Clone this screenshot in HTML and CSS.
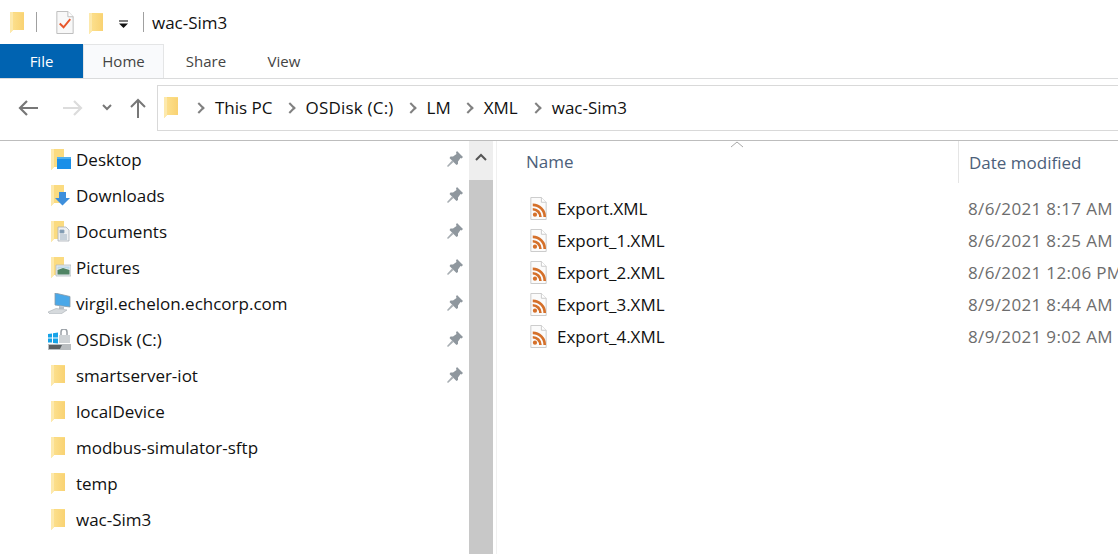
FILE: index.html
```html
<!DOCTYPE html>
<html lang="en">
<head>
    <meta charset="UTF-8">
    <title>wac-Sim3</title>
    <link rel="stylesheet" href="styles.css">
</head>
<body>

<svg class="defs" width="0" height="0">
    <defs>
        <linearGradient id="folder-fill" x1="0" y1="0" x2="1" y2="0">
            <stop offset="0" stop-color="#fcdf8c"/>
            <stop offset="1" stop-color="#f9d272"/>
        </linearGradient>
    </defs>
    <symbol id="folder" viewBox="0 0 14 21">
        <path d="M0 0H14V18H3L0 21Z" fill="#fbdb80"/>
        <path d="M3 1H14V18H3Z" fill="url(#folder-fill)"/>
        <path d="M0 0H3V18L0 21Z" fill="#fde9ac"/>
    </symbol>
    <symbol id="folder-back" viewBox="0 0 14 21">
        <path d="M0 0H13V18H3L0 21Z" fill="#fbdb80"/>
        <path d="M0 0H3V18L0 21Z" fill="#fde9ac"/>
    </symbol>
    <symbol id="xml" viewBox="0 0 17 24">
        <path d="M.5 .5H11.500L16.500 5.500V23.500H.5Z" fill="#fbfbfb" stroke="#cacaca"/>
        <path d="M11.500 .5V5.500H16.500" fill="#fff" stroke="#cacaca"/>
        <circle cx="4.800" cy="18.500" r="2.200" fill="#d5702a"/>
        <path d="M2.500 12.800A8 8 0 0 1 10.500 20.800M2.500 8.200A12.500 12.500 0 0 1 15 20.800" fill="none" stroke="#d5702a" stroke-width="2.800"/>
    </symbol>
    <symbol id="pin" viewBox="0 0 16 16">
        <path d="M10 0L16 6L14.500 7.500L13.500 7L11 10.500L11 13L9.500 14L2.500 7L3.500 5.500L6 5.500L9.500 3L9 1.500Z" fill="#8f979e"/>
        <path d="M5 9.500L0 15L1 16L6.500 11Z" fill="#a8aeb3"/>
    </symbol>
</svg>

<div class="titlebar">
    <svg class="qa-folder"><use href="#folder"/></svg>
    <span class="qa-sep"></span>
    <svg class="qa-check" viewBox="0 0 18 24">
        <path d="M.5 .5H12L17.500 6V23.500H.5Z" fill="#f8f8f8" stroke="#bbb"/>
        <path d="M12 .5V6H17.500" fill="#fff" stroke="#bbb"/>
        <path d="M3.500 13L7.500 17L14.500 8.500" fill="none" stroke="#e8562a" stroke-width="2"/>
    </svg>
    <svg class="qa-folder2"><use href="#folder"/></svg>
    <svg class="qa-more" viewBox="0 0 10 9">
        <path d="M0 .6H10" stroke="#111" stroke-width="1.200"/>
        <path d="M0 3.500H10L5 8.500Z" fill="#111"/>
    </svg>
    <span class="qa-sep qa-sep-title"></span>
    <span class="title-text">wac-Sim3</span>
</div>

<div class="tabs">
    <div class="tab tab-file">File</div>
    <div class="tab tab-home">Home</div>
    <div class="tab tab-share">Share</div>
    <div class="tab tab-view">View</div>
</div>

<div class="navbar">
    <svg class="nav-back" viewBox="0 0 20 16">
        <path d="M20 8H2M9 1L2 8L9 15" fill="none" stroke="#777" stroke-width="2.200"/>
    </svg>
    <svg class="nav-forward" viewBox="0 0 20 16">
        <path d="M0 8H18M11 1L18 8L11 15" fill="none" stroke="#dcdcdc" stroke-width="2.200"/>
    </svg>
    <svg class="nav-down" viewBox="0 0 10 7">
        <path d="M1 1L5 5L9 1" fill="none" stroke="#777" stroke-width="2"/>
    </svg>
    <svg class="nav-up" viewBox="0 0 16 20">
        <path d="M8 20V2M1 9L8 2L15 9" fill="none" stroke="#777" stroke-width="2"/>
    </svg>
    <div class="address">
        <svg class="addr-folder"><use href="#folder"/></svg>
        <span class="crumb">This PC</span>
        <span class="crumb crumb-disk">OSDisk (C:)</span>
        <span class="crumb">LM</span>
        <span class="crumb">XML</span>
        <span class="crumb crumb-last">wac-Sim3</span>
    </div>
</div>

<div class="main">
    <div class="sidebar">
        <div class="nav-row">
            <svg class="nav-icon" viewBox="0 0 20 21">
                <use href="#folder-back" width="14" height="21"/>
                <path d="M6 8H20V20H6Z" fill="#1a8fe8"/>
                <path d="M6 8H20V10H6Z" fill="#4fb0f0"/>
            </svg>
            <span>Desktop</span>
            <svg class="pin"><use href="#pin"/></svg>
        </div>
        <div class="nav-row">
            <svg class="nav-icon" viewBox="0 0 20 21">
                <use href="#folder-back" width="14" height="21"/>
                <path d="M8 7H15V13H19L11.500 20.500L4 13H8Z" fill="#3d8fdc"/>
            </svg>
            <span>Downloads</span>
            <svg class="pin"><use href="#pin"/></svg>
        </div>
        <div class="nav-row">
            <svg class="nav-icon" viewBox="0 0 20 21">
                <use href="#folder-back" width="14" height="21"/>
                <path d="M7 6H15L18 9V20H7Z" fill="#eef0f2" stroke="#a9b0b8" stroke-width=".8"/>
                <path d="M9 9H13V12H9ZM9 14H16M9 16H16M9 18H16" fill="#7f9ab2" stroke="#8aa2b8" stroke-width=".8"/>
            </svg>
            <span>Documents</span>
            <svg class="pin"><use href="#pin"/></svg>
        </div>
        <div class="nav-row">
            <svg class="nav-icon" viewBox="0 0 20 21">
                <use href="#folder-back" width="14" height="21"/>
                <path d="M5 8H20V19H5Z" fill="#e6ebee" stroke="#b4bcc2" stroke-width=".8"/>
                <path d="M6.500 13L12 11L18.500 13V17.500H6.500Z" fill="#4f8464"/>
                <path d="M6.500 9.500H18.500V12L12 10.500L6.500 12Z" fill="#b8d8ea"/>
            </svg>
            <span>Pictures</span>
            <svg class="pin"><use href="#pin"/></svg>
        </div>
        <div class="nav-row nav-row-device">
            <svg class="nav-icon" viewBox="0 0 23 21">
                <path d="M7 0L22 3.500V14L7 12Z" fill="#4aa8e8" stroke="#8a9aa6" stroke-width=".8"/>
                <path d="M11 13L16 13.800V16H11Z" fill="#b8c0c8"/>
                <path d="M0 19L8 15.500L19 17L13 21H2Z" fill="#d6dadd" stroke="#aab0b5" stroke-width=".6"/>
            </svg>
            <span>virgil.echelon.echcorp.com</span>
            <svg class="pin"><use href="#pin"/></svg>
        </div>
        <div class="nav-row nav-row-device">
            <svg class="nav-icon" viewBox="0 0 23 21">
                <path d="M0 5L4 4.500V8.500H0ZM5 4.200L10 3.500V8.500H5ZM0 9.500H4V13.500H0ZM5 9.500H10V14.500L5 14Z" fill="#17a3e8"/>
                <path d="M13 6V3A3 3 0 0 1 19 3V6" fill="none" stroke="#9aa0a6" stroke-width="1.500"/>
                <path d="M11 6H22V14H11Z" fill="#cfd3d6"/>
                <path d="M0 15H23V21H0Z" fill="#b9bdc0"/>
                <path d="M1 16H14L12 20H1Z" fill="#5a5f62"/>
            </svg>
            <span>OSDisk (C:)</span>
            <svg class="pin"><use href="#pin"/></svg>
        </div>
        <div class="nav-row">
            <svg class="nav-folder"><use href="#folder"/></svg>
            <span>smartserver-iot</span>
            <svg class="pin"><use href="#pin"/></svg>
        </div>
        <div class="nav-row">
            <svg class="nav-folder"><use href="#folder"/></svg>
            <span>localDevice</span>
        </div>
        <div class="nav-row">
            <svg class="nav-folder"><use href="#folder"/></svg>
            <span>modbus-simulator-sftp</span>
        </div>
        <div class="nav-row">
            <svg class="nav-folder"><use href="#folder"/></svg>
            <span>temp</span>
        </div>
        <div class="nav-row">
            <svg class="nav-folder"><use href="#folder"/></svg>
            <span>wac-Sim3</span>
        </div>
    </div>

    <div class="scrollbar">
        <div class="scroll-btn">
            <svg class="scroll-up" viewBox="0 0 12 8">
                <path d="M1 7L6 2L11 7" fill="none" stroke="#555" stroke-width="2"/>
            </svg>
        </div>
        <div class="scroll-thumb"></div>
    </div>

    <div class="files">
        <div class="col-head">
            <div class="col-name">Name</div>
            <svg class="sort-arrow" viewBox="0 0 14 7">
                <path d="M1 6L7 1L13 6" fill="none" stroke="#a8a8a8" stroke-width="1"/>
            </svg>
            <div class="col-date">Date modified</div>
        </div>
        <div class="file-list">
            <div class="file-row">
                <div class="file-name"><svg class="xml-icon"><use href="#xml"/></svg><span>Export.XML</span></div>
                <div class="file-date">8/6/2021 8:17 AM</div>
            </div>
            <div class="file-row">
                <div class="file-name"><svg class="xml-icon"><use href="#xml"/></svg><span>Export_1.XML</span></div>
                <div class="file-date">8/6/2021 8:25 AM</div>
            </div>
            <div class="file-row">
                <div class="file-name"><svg class="xml-icon"><use href="#xml"/></svg><span>Export_2.XML</span></div>
                <div class="file-date">8/6/2021 12:06 PM</div>
            </div>
            <div class="file-row">
                <div class="file-name"><svg class="xml-icon"><use href="#xml"/></svg><span>Export_3.XML</span></div>
                <div class="file-date">8/9/2021 8:44 AM</div>
            </div>
            <div class="file-row">
                <div class="file-name"><svg class="xml-icon"><use href="#xml"/></svg><span>Export_4.XML</span></div>
                <div class="file-date">8/9/2021 9:02 AM</div>
            </div>
        </div>
    </div>
</div>

</body>
</html>
```
FILE: styles.css
```css
html, body {
    margin: 0;
    height: 100%;
}
body {
    width: 1118px;
    height: 554px;
    overflow: hidden;
    background: white;
    color: #111;
    font-family: "Open Sans", "Noto Sans", sans-serif;
    font-size: 17px;
}
.defs {
    display: block;
    height: 0;
}
svg {
    display: block;
    flex: none;
}

/* title bar */
.titlebar {
    display: flex;
    align-items: center;
    height: 44px;
    padding-left: 10px;
}
.qa-folder {
    width: 14px;
    height: 21px;
}
.qa-sep {
    width: 1px;
    height: 20px;
    margin-left: 12px;
    background: #a0a0a0;
}
.qa-check {
    width: 18px;
    height: 23px;
    margin-left: 19px;
}
.qa-folder2 {
    width: 14px;
    height: 21px;
    margin-left: 15px;
    margin-top: 2px;
}
.qa-more {
    width: 9px;
    height: 9px;
    margin-left: 16px;
    margin-top: 4px;
}
.qa-sep-title {
    margin-left: 15px;
}
.title-text {
    margin-left: 8px;
    font-size: 17px;
}

/* ribbon tabs */
.tabs {
    display: flex;
    height: 34px;
    font-size: 15px;
    color: #444;
}
.tab {
    display: flex;
    align-items: center;
    justify-content: center;
    height: 34px;
}
.tab-file {
    width: 83px;
    background: #0063b1;
    color: white;
}
.tab-home {
    width: 81px;
    padding-bottom: 1px;
    background: #f9fafc;
    border: 1px solid #e4e5e6;
    border-bottom: none;
    box-sizing: border-box;
}
.tab-share {
    width: 84px;
}
.tab-view {
    width: 72px;
}

/* back / forward and address */
.navbar {
    display: flex;
    align-items: center;
    height: 63px;
    box-sizing: border-box;
    border-top: 1px solid #dadbdc;
    border-bottom: 1px solid #bdbdbd;
    padding-bottom: 9px;
    padding-left: 18px;
    padding-top: 5px;
}
.nav-back {
    width: 20px;
    height: 16px;
}
.nav-forward {
    width: 20px;
    height: 16px;
    margin-left: 25px;
}
.nav-down {
    width: 10px;
    height: 7px;
    margin-left: 19px;
}
.nav-up {
    width: 16px;
    height: 20px;
    margin-left: 18px;
}
.address {
    display: flex;
    align-items: center;
    flex: 1;
    height: 46px;
    box-sizing: border-box;
    margin-left: 11px;
    border: 1px solid #d9d9d9;
    border-right: none;
    padding-left: 6px;
    font-size: 17px;
}
.addr-folder {
    width: 14px;
    height: 21px;
    margin-right: 17px;
}
.crumb {
    display: flex;
    align-items: center;
}
.crumb::before {
    content: "";
    box-sizing: border-box;
    width: 8px;
    height: 8px;
    margin-right: 12px;
    border-top: 2.500px solid #808080;
    border-right: 2.500px solid #808080;
    transform: rotate(45deg);
}
.crumb + .crumb {
    margin-left: 13px;
}
.crumb-disk {
    letter-spacing: .2px;
}
.crumb + .crumb-last {
    margin-left: 14px;
}

/* main area */
.main {
    display: flex;
    height: 413px;
}
.sidebar {
    width: 469px;
    box-sizing: border-box;
}
.nav-row {
    display: flex;
    align-items: center;
    height: 36px;
    padding-left: 51px;
    font-size: 17px;
    color: #111;
}
.nav-row span {
    flex: 1;
    margin-left: 5px;
}
.nav-row-device {
    padding-left: 48px;
}
.nav-icon {
    width: 20px;
    height: 21px;
}
.nav-row .nav-folder {
    width: 14px;
    height: 21px;
    margin-right: 6px;
}
.nav-row-device .nav-icon {
    width: 23px;
}
.pin {
    width: 16px;
    height: 16px;
    margin-right: 6px;
}
.scrollbar {
    display: flex;
    flex-direction: column;
    width: 24px;
}
.scroll-btn {
    display: flex;
    align-items: center;
    justify-content: center;
    height: 39px;
    background: #eeeeee;
}
.scroll-up {
    width: 12px;
    height: 8px;
    margin-bottom: 8px;
}
.scroll-thumb {
    flex: 1;
    background: #c8c8c8;
}

/* file list */
.files {
    flex: 1;
    margin-left: 3px;
    border-left: 1px solid #f0f0f0;
    min-width: 0;
    position: relative;
    overflow: hidden;
}
.col-head {
    display: flex;
    height: 42px;
    align-items: center;
    color: #4c607a;
    font-size: 17px;
}
.col-name {
    width: 462px;
    padding-left: 29px;
    box-sizing: border-box;
    height: 42px;
    line-height: 42px;
    border-right: 1px solid #e5e5e5;
    flex: none;
}
.col-date {
    padding-left: 10px;
    white-space: nowrap;
}
.sort-arrow {
    position: absolute;
    left: 233px;
    top: 0;
    width: 14px;
    height: 7px;
}
.file-list {
    padding-top: 9px;
}
.file-row {
    display: flex;
    align-items: center;
    height: 32px;
    white-space: nowrap;
}
.file-name {
    display: flex;
    align-items: center;
    width: 471px;
    padding-left: 33px;
    box-sizing: border-box;
    flex: none;
}
.xml-icon {
    width: 17px;
    height: 23px;
    margin-right: 10px;
}
.file-date {
    color: #6d6d6d;
    letter-spacing: .35px;
}
```
